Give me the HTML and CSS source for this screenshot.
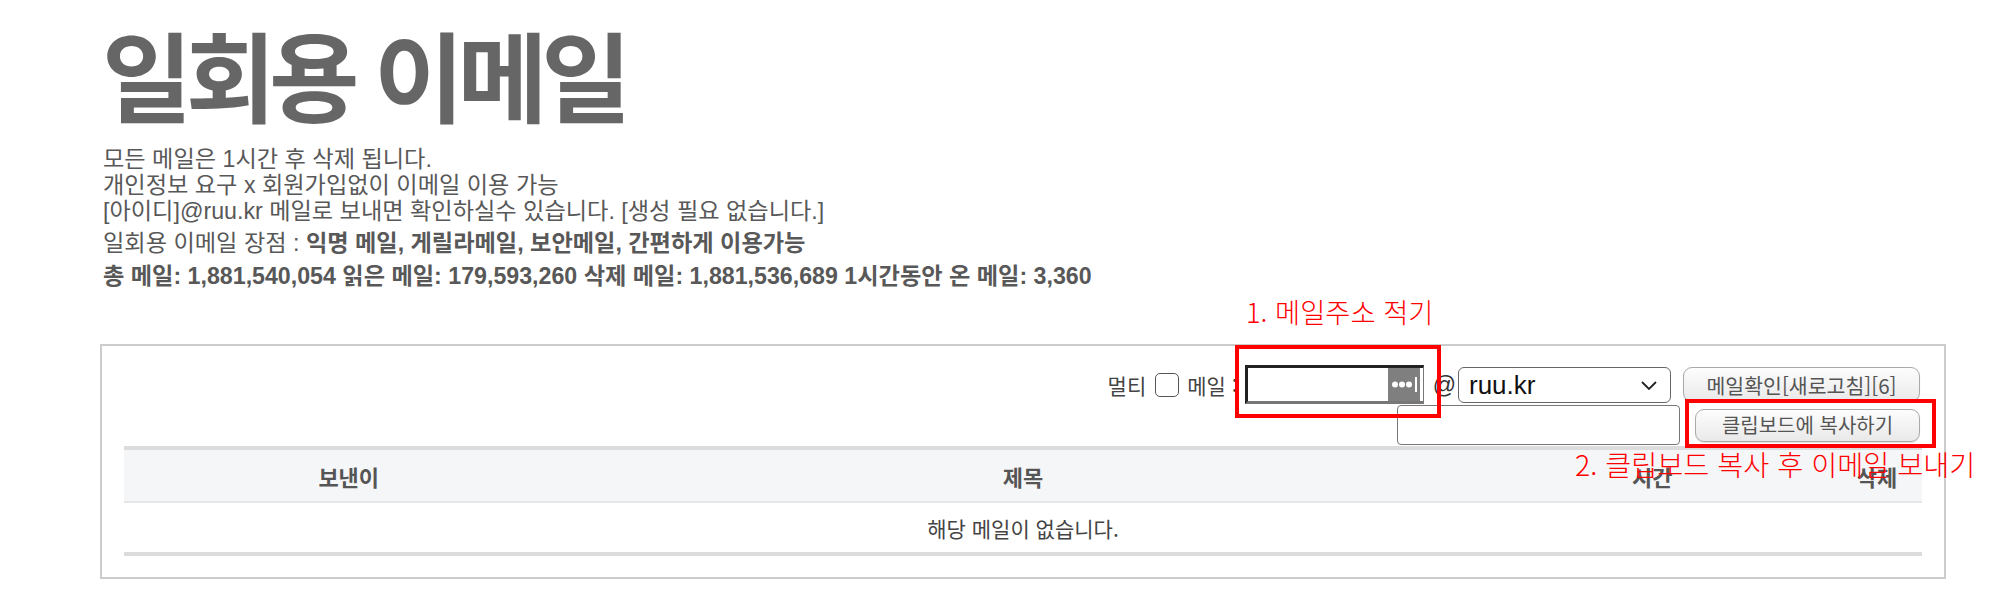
FILE: index.html
```html
<!DOCTYPE html>
<html lang="ko">
<head>
<meta charset="utf-8">
<title>일회용 이메일</title>
<link rel="stylesheet" href="styles.css">
</head>
<body>
<div class="page">
  <h1 class="title">일회용 이메일</h1>
  <div class="intro">
    <div>모든 메일은 1시간 후 삭제 됩니다.</div>
    <div>개인정보 요구 x 회원가입없이 이메일 이용 가능</div>
    <div>[아이디]@ruu.kr 메일로 보내면 확인하실수 있습니다. [생성 필요 없습니다.]</div>
  </div>
  <div class="merit">일회용 이메일 장점 : <b>익명 메일, 게릴라메일, 보안메일, 간편하게 이용가능</b></div>
  <div class="stats">총 메일: 1,881,540,054 읽은 메일: 179,593,260 삭제 메일: 1,881,536,689 1시간동안 온 메일: 3,360</div>

  <div class="box">
    <div class="form">
      <div class="row row1">
        <span class="lbl">멀티</span>
        <input type="checkbox" class="chk">
        <span class="lbl">메일 :</span>
        <div class="pw">
          <span class="pw-field"></span>
          <svg class="pw-icon" width="32" height="33" viewBox="0 0 32 33">
            <rect width="32" height="33" fill="#7f7f7f"/>
            <circle cx="7" cy="16.5" r="3" fill="#fff"/>
            <circle cx="14" cy="16.5" r="3" fill="#fff"/>
            <circle cx="21" cy="16.5" r="3" fill="#fff"/>
            <rect x="27" y="9" width="2" height="15" fill="#fff"/>
          </svg>
        </div>
        <span class="at">@</span>
        <div class="select">
          <span>ruu.kr</span>
          <svg width="18" height="12" viewBox="0 0 18 12"><path d="M2 3 L9 10 L16 3" fill="none" stroke="#222" stroke-width="1.8"/></svg>
        </div>
        <button class="btn btn-check">메일확인[새로고침][6]</button>
      </div>
      <div class="row row2">
        <input type="text" class="copy-input">
        <button class="btn btn-copy">클립보드에 복사하기</button>
      </div>
    </div>
    <table class="mail">
      <thead>
        <tr><th class="c1">보낸이</th><th class="c2">제목</th><th class="c3">시간</th><th class="c4">삭제</th></tr>
      </thead>
      <tbody>
        <tr><td colspan="4">해당 메일이 없습니다.</td></tr>
      </tbody>
    </table>
  </div>

  <div class="note note1">1. 메일주소 적기</div>
  <div class="mark mark1"></div>
  <div class="mark mark2"></div>
  <div class="note note2">2. 클립보드 복사 후 이메일 보내기</div>
</div>
</body>
</html>
```

FILE: styles.css
```css
html, body {
  margin: 0;
  padding: 0;
  background: #fff;
}
body {
  font-family: "Liberation Sans", "Noto Sans CJK KR", sans-serif;
  color: #585858;
}
.page {
  position: relative;
  padding: 20px 68px 0 100px;
}
.title {
  margin: 0 0 22px 2px;
  font-family: "Noto Sans CJK KR", sans-serif;
  font-weight: 700;
  font-size: 98px;
  line-height: 104px;
  letter-spacing: -6.5px;
  color: #666;
}
.intro, .merit, .stats {
  margin-left: 3px;
  font-size: 23.2px;
  line-height: 26px;
}
.merit { margin-top: 6px; }
.stats { margin-top: 7px; font-weight: bold; }

.box {
  margin-top: 55px;
  border: 2px solid #ccc;
  padding: 19px 22px 21px 22px;
}
.form {
  display: flex;
  flex-direction: column;
  align-items: flex-end;
}
.row {
  display: flex;
  align-items: center;
  justify-content: flex-end;
}
.row1 { height: 39px; padding-right: 2px; }
.row2 { height: 40px; padding-right: 2px; margin-top: 1px; }

.lbl {
  font-family: "Noto Sans CJK KR", sans-serif;
  font-size: 21px;
  line-height: 26px;
  color: #444;
}
.chk {
  appearance: none;
  -webkit-appearance: none;
  width: 24px;
  height: 24px;
  margin: 0 8px 0 9px;
  border: 1.5px solid #555;
  border-radius: 5px;
  background: #fff;
}
.pw {
  display: flex;
  width: 179px;
  height: 39px;
  box-sizing: border-box;
  margin-left: 7px;
  border-style: solid;
  border-width: 3px 1px 3px 3px;
  border-color: #222 #777 #777 #222;
  background: #fff;
}
.pw-field { flex: 1; }
.pw-icon { display: block; margin-right: 3px; }
.at {
  margin: 0 2px 0 9px;
  font-size: 23px;
  line-height: 26px;
  color: #333;
}
.select {
  display: flex;
  align-items: center;
  justify-content: space-between;
  box-sizing: border-box;
  width: 213px;
  height: 36px;
  padding: 0 12px 0 10px;
  border: 1px solid #666;
  border-radius: 6px;
  background: #fff;
  font-size: 26px;
  line-height: 30px;
  color: #111;
}
.btn {
  box-sizing: border-box;
  border: 1px solid #aaa;
  border-radius: 9px;
  background: linear-gradient(#fdfdfd, #e9e9e9);
  box-shadow: 0 1px 1px rgba(0,0,0,0.12);
  font-family: "Noto Sans CJK KR", sans-serif;
  font-size: 20.5px;
  line-height: 28px;
  color: #555;
  padding: 0;
}
.btn-check {
  width: 237px;
  height: 35px;
  margin-left: 12px;
}
.copy-input {
  box-sizing: border-box;
  width: 283px;
  height: 40px;
  border: 1.5px solid #777;
  border-radius: 4px;
  margin: 0;
}
.btn-copy {
  width: 225px;
  height: 33px;
  margin-left: 15px;
  font-size: 20px;
}

.mail {
  width: 100%;
  border-collapse: collapse;
  margin-top: 1px;
}
.mail th {
  height: 51px;
  padding: 0;
  background: #f5f6f8;
  border-top: 4px solid #dcdcdc;
  border-bottom: 2px solid #e6e6e6;
  font-family: "Noto Sans CJK KR", sans-serif;
  font-size: 22px;
  line-height: 30px;
  font-weight: 700;
  color: #555;
}
.c1 { width: 25%; }
.c2 { width: 50%; }
.c3 { width: 20%; }
.c4 { width: 5%; }
.mail td {
  height: 49px;
  padding: 0;
  text-align: center;
  border-bottom: 4px solid #dcdcdc;
  font-family: "Noto Sans CJK KR", sans-serif;
  font-size: 21px;
  line-height: 30px;
  color: #444;
}

.note {
  position: absolute;
  font-family: "Noto Sans CJK KR", sans-serif;
  font-weight: 300;
  color: #ff0000;
  white-space: nowrap;
}
.note1 {
  left: 1246px;
  top: 292px;
  font-size: 27.3px;
  line-height: 38px;
}
.note2 {
  left: 1575px;
  top: 445px;
  font-size: 28.3px;
  line-height: 38px;
}
.mark {
  position: absolute;
  border: 4px solid #ff0000;
  box-sizing: border-box;
}
.mark1 { left: 1235px; top: 345px; width: 206px; height: 73px; }
.mark2 { left: 1685px; top: 399px; width: 251px; height: 49px; }
```
